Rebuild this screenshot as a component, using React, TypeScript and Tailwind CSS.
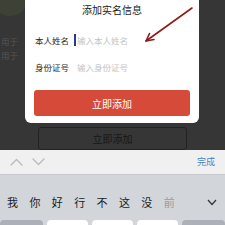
import React from 'react'

const cjk = { fontFamily: '"Noto Sans CJK SC", "Noto Sans", sans-serif' }

function Chevron({ up }: { up?: boolean }) {
  return (
    <svg width="13" height="8" viewBox="0 0 13 8" fill="none">
      <path
        d={up ? 'M1 7 L6.5 1.5 L12 7' : 'M1 1 L6.5 6.5 L12 1'}
        stroke="#b9b9bb"
        strokeWidth="1.3"
        strokeLinecap="round"
        strokeLinejoin="round"
      />
    </svg>
  )
}

export default function App() {
  const candidates = ['我', '你', '好', '行', '不', '这', '没', '前']

  return (
    <div className="relative h-[225px] w-[225px] overflow-hidden bg-[#d2d5da]" style={cjk}>
      {/* dimmed page behind the dialog */}
      <div className="relative flex h-[150px] flex-col overflow-hidden bg-[#363636]">
        <div className="absolute -left-[8px] -top-[20px] h-[36px] w-[36px] rounded-full bg-[#3e4136]" />
        <div className="mt-[36px] flex flex-col gap-[4px] pl-[1px] text-[8.5px] leading-[10px] text-[#555555]">
          <span>用于</span>
          <span>用于</span>
        </div>
        <div className="mx-auto mt-[67px] flex h-[24px] w-[149px] items-center justify-center rounded-[3px] border border-[#222222] text-[10px] text-[#161616]">
          立即添加
        </div>
      </div>

      {/* accessory bar */}
      <div className="flex h-[25px] items-center justify-between border-b border-[#c8cacf] bg-[#f0f0f1] pl-[10px] pr-[10px]">
        <div className="flex items-center gap-[9px]">
          <Chevron up />
          <Chevron />
        </div>
        <span className="text-[9px] text-[#4a87c6]">完成</span>
      </div>

      {/* keyboard */}
      <div className="flex flex-col">
        <div className="flex h-[45px] items-center pl-[7px] pr-[8px] pt-[10px] text-[11px] text-[#1c1c1c]">
          {candidates.map((c, i) => (
            <span key={c} className={i === candidates.length - 1 ? 'w-[30px] text-[#9a9a9a]' : 'w-[22.4px]'}>
              {c}
            </span>
          ))}
          <svg className="ml-auto" width="10" height="7" viewBox="0 0 10 7" fill="none">
            <path d="M1 1 L5 5.5 L9 1" stroke="#333" strokeWidth="1.2" />
          </svg>
        </div>
        <div className="flex gap-[4px]">
          <div className="h-[10px] w-[43px] rounded-[4px] bg-[#acb1b9]" />
          <div className="h-[10px] w-[41px] rounded-[4px] bg-white" />
          <div className="h-[10px] w-[41px] rounded-[4px] bg-white" />
          <div className="h-[10px] w-[41px] rounded-[4px] bg-white" />
          <div className="h-[10px] flex-1 rounded-[4px] bg-[#acb1b9]" />
        </div>
      </div>

      {/* dialog */}
      <div className="absolute left-[25px] top-0 flex h-[123px] w-[174px] flex-col rounded-b-[6px] bg-white px-[9px]">
        <div className="flex h-[18px] items-center justify-center text-[10px] text-[#222222]">添加实名信息</div>
        <div className="mt-[12px] flex h-[20px] items-center pl-[1px] text-[8.5px]">
          <span className="w-[39px] text-[#2a2a2a]">本人姓名</span>
          <span className="mr-[1px] h-[12px] w-[2px] bg-[#283a8c]" />
          <span className="text-[#c4c4c4]">输入本人姓名</span>
        </div>
        <div className="mt-[7px] flex h-[20px] items-center pl-[1px] text-[8.5px]">
          <span className="w-[42px] text-[#2a2a2a]">身份证号</span>
          <span className="text-[#c4c4c4]">输入身份证号</span>
        </div>
        <div className="mt-[13px] flex h-[26px] items-center justify-center rounded-[3px] bg-[#d64a3a] text-[10px] text-white">
          立即添加
        </div>
      </div>

      {/* annotation arrow */}
      <svg className="absolute left-0 top-0" width="225" height="225" viewBox="0 0 225 225" fill="none">
        <path d="M192 8 L146 41" stroke="#8e1b1b" strokeWidth="1.6" strokeLinecap="round" />
        <path d="M146 41 L149.5 33.5 M146 41 L154 39.5" stroke="#8e1b1b" strokeWidth="1.6" strokeLinecap="round" />
      </svg>
    </div>
  )
}
